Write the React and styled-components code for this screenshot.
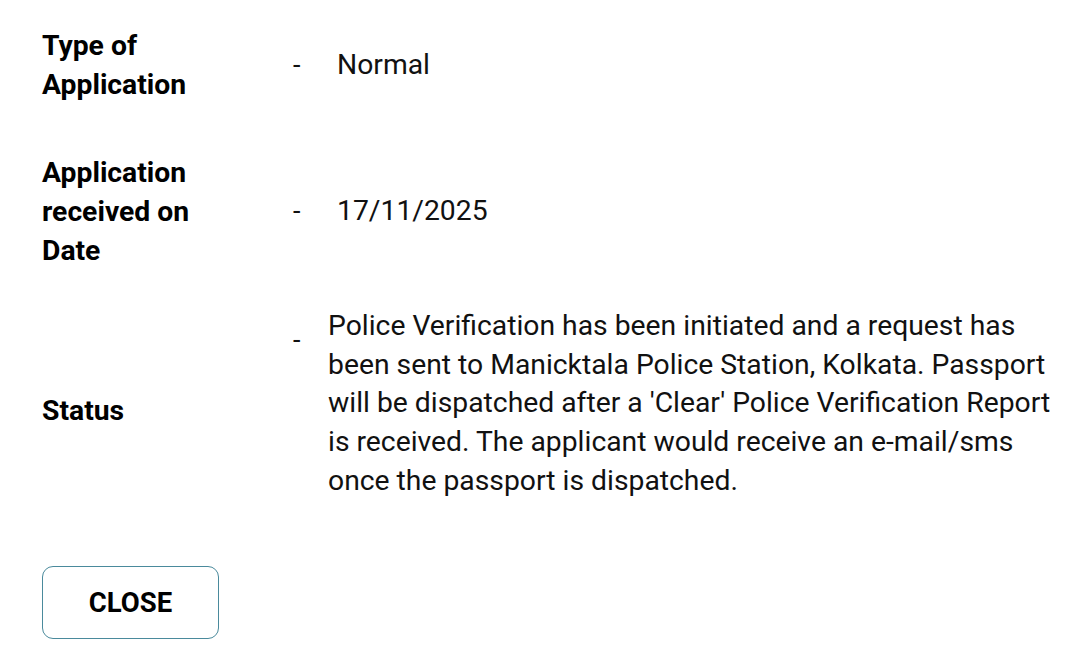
import React from 'react';
import styled, { createGlobalStyle } from 'styled-components';

const GlobalStyle = createGlobalStyle`
  html, body {
    margin: 0;
    padding: 0;
    background: #fff;
  }
  body {
    font-family: Roboto, "Noto Sans", "Liberation Sans", sans-serif;
    color: #000;
  }
`;

const Page = styled.div`
  width: 1080px;
  padding: 26px 0 0 42px;
  box-sizing: border-box;
`;

const Row = styled.div`
  display: grid;
  grid-template-columns: 251px ${({ $valueCol }) => $valueCol}px 1fr;
  align-items: center;
  margin-top: ${({ $top }) => $top || 0}px;
`;

const Label = styled.div`
  width: 190px;
  font-size: 28.3px;
  font-weight: 700;
  line-height: 39px;
  padding-top: ${({ $drop }) => $drop || 0}px;
`;

const Dash = styled.div`
  font-size: 27px;
  line-height: 39px;
  color: #111;
  align-self: ${({ $top }) => ($top ? 'start' : 'center')};
  margin-top: ${({ $top }) => ($top ? 14 : 0)}px;
`;

const Value = styled.div`
  font-size: 28.3px;
  line-height: 38.7px;
  color: #111;
  max-width: 735px;
`;

const CloseButton = styled.button`
  display: flex;
  align-items: center;
  justify-content: center;
  margin-top: 65px;
  width: 177px;
  height: 73px;
  background: #fff;
  border: 1.5px solid #4a8a9c;
  border-radius: 11px;
  font-family: Roboto, "Noto Sans", "Liberation Sans", sans-serif;
  font-size: 27.5px;
  font-weight: 700;
  color: #000;
  padding: 0;
`;

const App = () => {
  return (
    <>
      <GlobalStyle />
      <Page>
        <Row $valueCol={44}>
          <Label>Type of Application</Label>
          <Dash>-</Dash>
          <Value>Normal</Value>
        </Row>
        <Row $valueCol={44} $top={49}>
          <Label>Application received on Date</Label>
          <Dash>-</Dash>
          <Value>17/11/2025</Value>
        </Row>
        <Row $valueCol={35} $top={37}>
          <Label $drop={13}>Status</Label>
          <Dash $top>-</Dash>
          <Value>
            Police Verification has been initiated and a request has been sent to
            Manicktala Police Station, Kolkata. Passport will be dispatched after a
            'Clear' Police Verification Report is received. The applicant would
            receive an e-mail/sms once the passport is dispatched.
          </Value>
        </Row>
        <CloseButton>CLOSE</CloseButton>
      </Page>
    </>
  );
};

export default App;
